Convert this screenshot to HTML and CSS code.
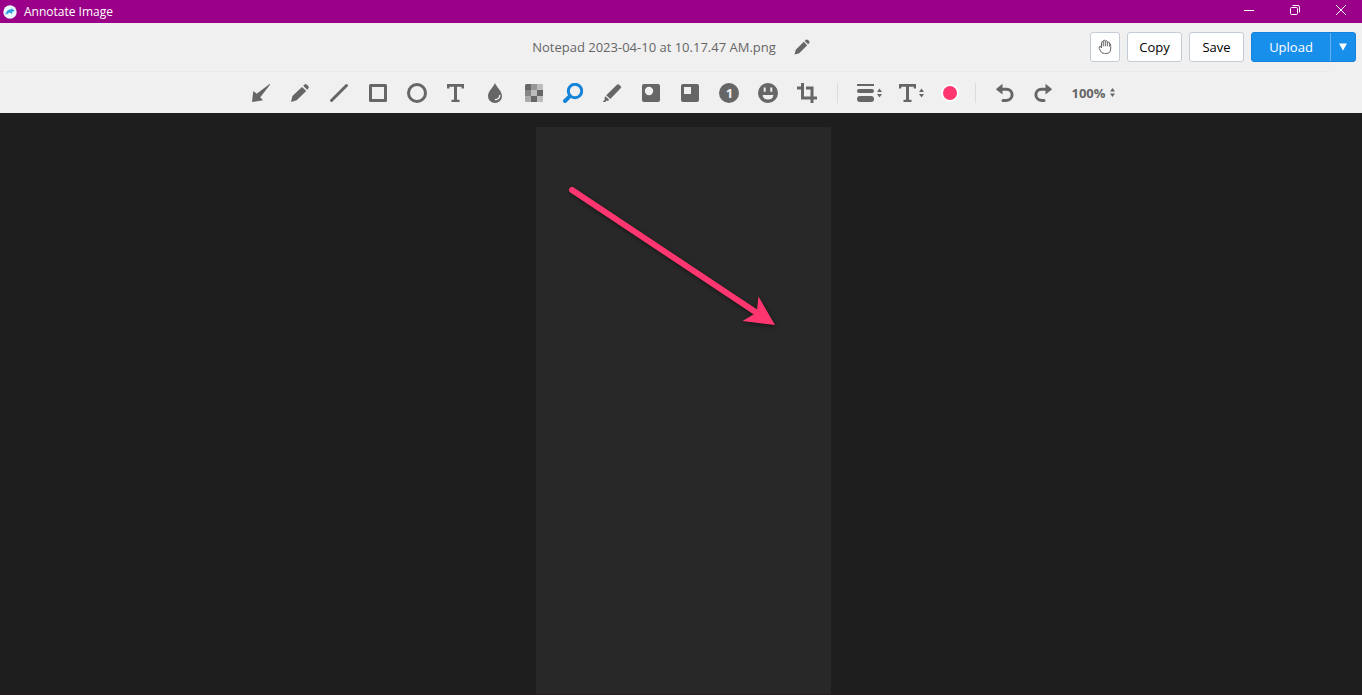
FILE: index.html
```html
<!DOCTYPE html>
<html lang="en">
<head>
<meta charset="utf-8">
<title>Annotate Image</title>
<link rel="stylesheet" href="styles.css">
</head>
<body>
<div class="titlebar">
  <svg class="logo" viewBox="0 0 14 14" aria-hidden="true"><circle cx="7" cy="7" r="6.7" fill="#eaf5fc"/><path d="M2.3 10C3 6.500 5 4.300 8 4.300L9.200 3.300 9.600 4.500 11.600 5.200 11 6.300 9.500 6.600 8.700 9.200 7.600 7.700 5.600 7.800 4.700 9.700 4.200 8.200Z" fill="#2f9ee0"/></svg>
  <span class="window-title">Annotate Image</span>
  <div class="window-controls">
    <button class="window-button" aria-label="Minimize"><svg viewBox="0 0 12 12"><path d="M1 6.500H11"/></svg></button>
    <button class="window-button" aria-label="Restore"><svg viewBox="0 0 12 12"><rect x="1.500" y="3.500" width="7" height="7" rx="1"/><path d="M3.500 1.500H9Q10.500 1.500 10.500 3V8.500"/></svg></button>
    <button class="window-button" aria-label="Close"><svg viewBox="0 0 12 12"><path d="M1 1L11 11M11 1L1 11"/></svg></button>
  </div>
</div>

<header class="header">
  <div class="filename">
    <span>Notepad 2023-04-10 at 10.17.47 AM.png</span>
    <button class="rename" aria-label="Rename"><svg viewBox="0 0 16 16"><path d="M.5 15.500L1.800 10.800 9.800 2.800 13.200 6.200 5.200 14.200ZM10.700 1.900L12 .7Q13 0 14 .9L15.100 2Q16 3 15.300 4L14.100 5.300Z"/></svg></button>
  </div>
  <div class="actions">
    <button class="button hand" aria-label="Pan"><svg viewBox="0 0 14 16"><path d="M3.500 9V3.600Q3.500 2.600 4.400 2.600T5.300 3.600V2.200Q5.300 1.200 6.300 1.200T7.300 2.200V2.700Q7.400 1.700 8.300 1.700T9.300 2.700V3.800Q9.400 3 10.300 3 11.200 3 11.500 4.100 12.700 4.500 12.700 6.500V10Q12.700 14.500 7.800 14.500H6.500Q3.600 14.500 2.500 12L1.300 9.500Q1 7.600 1.800 7.200 2.700 6.800 3.500 9ZM5.300 3.500V7.300M7.300 2.700V7.300M9.300 3.800V7.300M11.400 4V7.500"/></svg></button>
    <button class="button">Copy</button>
    <button class="button">Save</button>
    <div class="split">
      <button class="upload">Upload</button>
      <button class="upload-menu" aria-label="Upload options"><svg viewBox="0 0 8 8"><path d="M0 .5H8L4 7.500Z"/></svg></button>
    </div>
  </div>
</header>

<div class="toolbar" role="toolbar" aria-label="Annotation tools">
  <div class="tools">
    <button class="tool" aria-label="Arrow"><svg viewBox="0 0 20 20"><path d="M1 19L2.300 8 5.700 10.700 18.600 1 19.200 1.600 9.300 14.300 12 17.300Z"/></svg></button>
    <button class="tool" aria-label="Pencil"><svg viewBox="0 0 20 20"><path d="M1 19L2.400 13 12 3.900 16.200 8.100 6.700 17.200ZM13.200 2.800L14.600 1.500Q15.900.6 17 1.700L18.400 3.200Q19.400 4.400 18.300 5.600L17.200 6.800Z"/></svg></button>
    <button class="tool" aria-label="Line"><svg viewBox="0 0 20 20"><path class="stroke" d="M2.500 17.500L17.500 2.500"/></svg></button>
    <button class="tool" aria-label="Rectangle"><svg viewBox="0 0 20 20"><rect class="stroke" x="2.500" y="2.500" width="15" height="15"/></svg></button>
    <button class="tool" aria-label="Ellipse"><svg viewBox="0 0 20 20"><circle class="stroke" cx="10" cy="10" r="8.500"/></svg></button>
    <button class="tool" aria-label="Text"><svg viewBox="0 0 20 20"><path d="M1 1H18V5.500H15.500V3.800H11V16.800H13.500V19H5.500V16.800H8V3.800H3.500V5.500H1Z"/></svg></button>
    <button class="tool" aria-label="Blur"><svg viewBox="0 0 20 20"><path d="M10 0C11.500 4 17 8.300 17 13A7 7 0 0 1 3 13C3 8.300 8.500 4 10 0Z"/><path d="M14.800 12.500Q14.500 16 10.500 16.700" fill="none" stroke="#fff" stroke-width="1.300" stroke-linecap="round"/></svg></button>
    <button class="tool" aria-label="Pixelate"><svg viewBox="0 0 20 20"><rect x="1" y="1" width="18" height="18" rx="2" fill="#969696"/><path d="M3 1H7V7H1V3Q1 1 3 1ZM13 7H19V13H13ZM7 13H13V19H7Z" fill="#666"/><path d="M13 1H17Q19 1 19 3V7H13ZM7 7H13V13H7ZM13 13H19V17Q19 19 17 19H13Z" fill="#bcbcbc"/><path d="M1 7H7V13H1Z" fill="#858585"/><path d="M1 13H7V19H3Q1 19 1 17Z" fill="#aaa"/></svg></button>
    <button class="tool active" aria-label="Magnify" aria-pressed="true"><svg viewBox="0 0 20 20"><circle class="stroke" cx="12" cy="8" r="6.700"/><path class="stroke thick" d="M6.700 13.300L2 18"/></svg></button>
    <button class="tool" aria-label="Highlighter"><svg viewBox="0 0 20 20"><path d="M4.200 12.200L15.200 1.600Q16 .8 16.900 1.600L18.900 3.500Q19.600 4.300 18.900 5.100L8.300 16.100ZM3.600 13.200L7.300 16.900 5.400 18.100 4.200 17.500 3.400 19H.8L2.900 16.300 2.400 15.100Z"/></svg></button>
    <button class="tool" aria-label="Spotlight ellipse"><svg viewBox="0 0 20 20"><rect x="1" y="1" width="18" height="18" rx="2"/><circle cx="8" cy="8" r="4.200" fill="#f0f0f0"/></svg></button>
    <button class="tool" aria-label="Spotlight rectangle"><svg viewBox="0 0 20 20"><rect x="1" y="1" width="18" height="18" rx="2"/><path d="M4 4H11V11H4Z" fill="#f0f0f0"/></svg></button>
    <button class="tool step" aria-label="Step number"><span>1</span></button>
    <button class="tool" aria-label="Emoji"><svg viewBox="0 0 20 20"><circle cx="10" cy="10" r="10"/><path d="M4.500 12H15.500Q14.800 16.500 10 16.500T4.500 12ZM5.700 4.500H7.700V8.800H5.700ZM12.300 4.500H14.300V8.800H12.300Z" fill="#f0f0f0"/></svg></button>
    <button class="tool" aria-label="Crop"><svg viewBox="0 0 20 20"><path d="M4 0H7V13.500H13.500V6.500H9V3.500H16.500V13.500H20V16.500H16.500V20H13.500V16.500H4V6.500H0V3.500H4Z"/></svg></button>
  </div>
  <span class="divider"></span>
  <div class="options">
    <button class="option" aria-label="Line width"><svg viewBox="0 0 25 20"><path d="M0 1H17V3H0Z"/><rect y="6" width="17" height="4" rx="2"/><rect y="13" width="17" height="6" rx="3"/><path d="M20 9L22.500 5.500 25 9ZM20 11H25L22.500 14.500Z"/></svg></button>
    <button class="option" aria-label="Text size"><svg viewBox="0 0 25 20"><path d="M0 1H17V5.500H14.700V3.800H10V16.800H12.500V19H4.500V16.800H7V3.800H2.300V5.500H0Z"/><path d="M20 9L22.500 5.500 25 9ZM20 11H25L22.500 14.500Z"/></svg></button>
    <button class="color" aria-label="Color"></button>
  </div>
  <span class="divider"></span>
  <div class="tools">
    <button class="tool" aria-label="Undo"><svg viewBox="0 0 20 20"><path d="M.8 6.200L7.500.8V11.600Z"/><path class="stroke" d="M6 6.200H11.500A5.600 5.600 0 0 1 11.500 17.400H8"/></svg></button>
    <button class="tool" aria-label="Redo"><svg viewBox="0 0 20 20"><path d="M18.200 6.200L11.500.8V11.600Z"/><path class="stroke" d="M13 6.200H7.500A5.600 5.600 0 0 0 7.500 17.400H10"/></svg></button>
  </div>
  <button class="zoom">100%<svg viewBox="0 0 5 9"><path d="M0 3.500L2.500 0 5 3.500ZM0 5.500H5L2.500 9Z"/></svg></button>
</div>

<main class="canvas">
  <div class="image">
    <svg class="drawing" viewBox="0 0 295 220" role="img" aria-label="Arrow annotation"><path d="M36 63L221 186" stroke="#ff3670" stroke-width="6" stroke-linecap="round"/><path d="M239 198L222.500 169.500 221 183 217.500 187.500 206.500 194Z" fill="#ff3670"/></svg>
  </div>
</main>
</body>
</html>
```
FILE: styles.css
```css
* {
  box-sizing: border-box;
}

body {
  margin: 0;
  min-height: 100vh;
  display: flex;
  flex-direction: column;
  background: #f0f0f0;
  font-family: "Open Sans", "Noto Sans", sans-serif;
  font-size: 13px;
  color: #666;
}

button {
  margin: 0;
  padding: 0;
  border: 0;
  background: none;
  font: inherit;
  color: inherit;
}

svg {
  display: block;
  fill: currentColor;
}

.titlebar {
  display: flex;
  align-items: center;
  height: 23px;
  padding-left: 3px;
  background: #9b0089;
  color: #fff;
  font-size: 12px;
  overflow: hidden;
}

.logo {
  width: 14px;
  height: 14px;
}

.window-title {
  margin-left: 7px;
}

.window-controls {
  display: flex;
  align-self: stretch;
  margin: 0 -2px 0 auto;
}

.window-button {
  width: 46px;
  height: 20px;
  display: grid;
  place-items: center;
}

.window-button svg {
  width: 12px;
  height: 12px;
  fill: none;
  stroke: currentColor;
}

.header {
  display: grid;
  grid-template-columns: 1fr auto 1fr;
  align-items: center;
  height: 48px;
  padding: 0 6px;
}

.filename {
  grid-column: 2;
  display: flex;
  align-items: center;
  gap: 18px;
  margin-right: 20px;
}

.rename svg {
  width: 16px;
  height: 16px;
}

.actions {
  display: flex;
  justify-content: flex-end;
  gap: 7px;
}

.button {
  width: 55px;
  height: 30px;
  border: 1px solid #c3ccd4;
  border-radius: 3px;
  background: #fff;
  color: #000;
}

.hand {
  width: 30px;
  display: grid;
  place-items: center;
  color: #666;
}

.hand svg {
  width: 14px;
  height: 16px;
  fill: none;
  stroke: currentColor;
}

.split {
  display: flex;
  border: 1px solid #1583dc;
  border-radius: 3px;
  background: #198fec;
  color: #fff;
}

.upload {
  width: 78px;
  height: 28px;
}

.upload-menu {
  width: 25px;
  display: grid;
  place-items: center;
  border-left: 1px solid #62b2f1;
}

.upload-menu svg {
  width: 8px;
  height: 8px;
}

.toolbar {
  display: flex;
  align-items: center;
  justify-content: center;
  height: 42px;
  margin-right: 32px;
  padding-left: 36px;
  border-top: 1px solid #ebebeb;
}

.tools {
  display: flex;
  gap: 19px;
}

.tool,
.tool svg {
  width: 20px;
  height: 20px;
}

.stroke {
  fill: none;
  stroke: currentColor;
  stroke-width: 3px;
  stroke-linecap: round;
  stroke-linejoin: round;
}

.thick {
  stroke-width: 4px;
}

.active {
  color: #1583d8;
}

.step {
  border-radius: 50%;
  background: #666;
  color: #f0f0f0;
  font-weight: 700;
  line-height: 20px;
}

.divider {
  width: 1px;
  height: 20px;
  margin: 0 19px 0 20px;
  background: #dcdcdc;
}

.options {
  display: flex;
  align-items: center;
  gap: 17px;
  margin-right: -4px;
}

.option svg {
  width: 25px;
  height: 20px;
}

.color {
  width: 18px;
  height: 18px;
  border: 2px solid #fff;
  border-radius: 50%;
  background: #ff3670;
}

.zoom {
  display: flex;
  align-items: center;
  gap: 4px;
  margin-left: 17px;
  font-weight: 700;
}

.zoom svg {
  width: 5px;
  height: 9px;
}

.canvas {
  flex: 1;
  display: flex;
  justify-content: center;
  padding: 14px 0 0 5px;
  border-bottom: 1px solid #231c20;
  background: #1e1e1e;
}

.image {
  width: 295px;
  background: #282828;
}

.drawing {
  width: 100%;
  filter: drop-shadow(1px 2px 2px rgb(0 0 0 / 45%));
}
```
